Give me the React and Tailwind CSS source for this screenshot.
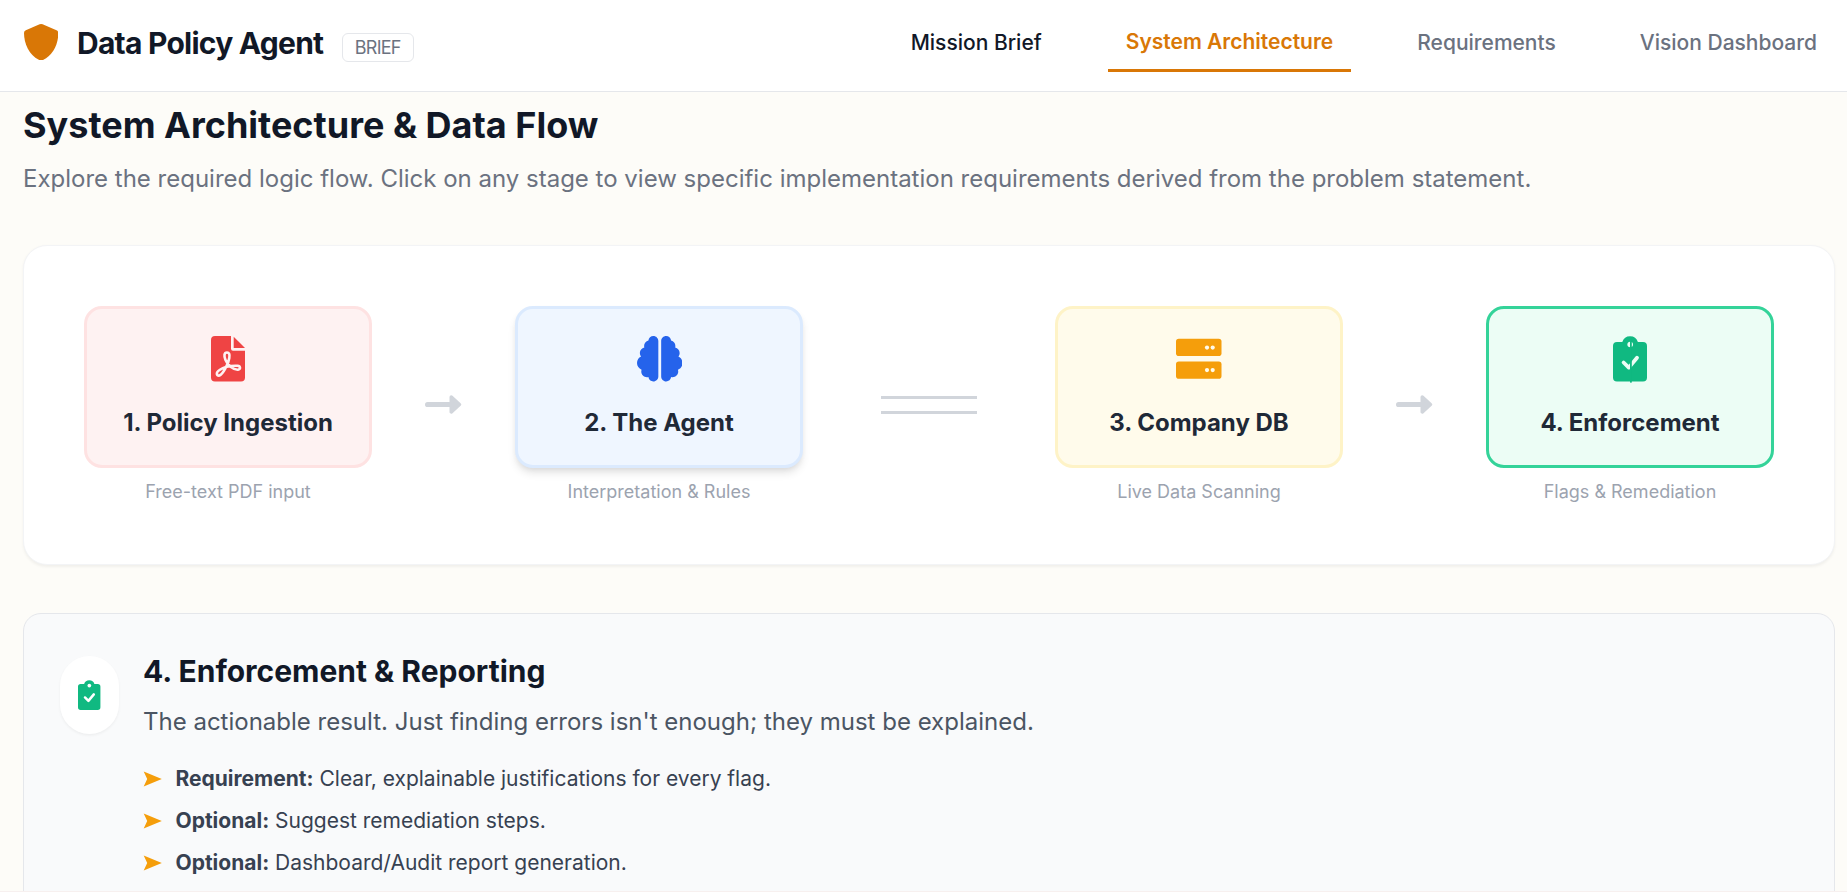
import React, { useState } from 'react';
import { FaBrain } from 'react-icons/fa6';

const NAV_ITEMS = ['Mission Brief', 'System Architecture', 'Requirements', 'Vision Dashboard'];

const ShieldIcon = ({ className }) => (
  <svg viewBox="0 0 34.3 36.6" className={className} fill="currentColor">
    <path d="M15.6 .3 Q17.1 -.3 18.6 .3 L32.5 6.2 Q34.3 7 34.3 9 C34.3 20 29 31.5 18.6 36.2 Q17.1 36.8 15.7 36.2 C5.3 31.5 0 20 0 9 Q0 7 1.8 6.2 Z" />
  </svg>
);

const PdfIcon = ({ className }) => (
  <svg viewBox="0 0 34 45.5" className={className} fill="currentColor">
    <path d="M4 0 H20 V12.7 A2 2 0 0 0 22 14.7 H34 V41.5 A4 4 0 0 1 30 45.5 H4 A4 4 0 0 1 0 41.5 V4 A4 4 0 0 1 4 0 Z" />
    <path d="M22.7 .7 L34 12 H22.7 Z" />
    <path
      d="M16 16.5 C13 16.5 12.8 20 14.5 24 C16.5 29 22 34 27 33.7 C30 33.4 29.5 30 26.5 29.8 C20 29.5 13 31 8.5 34 C4.5 36.5 5.5 40.3 8.5 39.5 C12 38 17.5 28 18.3 22 C19 18 18 16.5 16 16.5 Z"
      fill="none"
      stroke="#fef2f2"
      strokeWidth="2.6"
      strokeLinejoin="round"
    />
  </svg>
);

const ServerIcon = ({ className }) => (
  <svg viewBox="0 -2.75 45.5 45.5" className={className} fill="currentColor">
    <rect x="0" y="0" width="45.5" height="17.2" rx="2.8" />
    <rect x="0" y="22.8" width="45.5" height="17.2" rx="2.8" />
    <g fill="#fffbeb">
      <circle cx="31" cy="8.8" r="2.1" />
      <circle cx="36.7" cy="8.8" r="2.1" />
      <circle cx="31" cy="31.3" r="2.1" />
      <circle cx="36.7" cy="31.3" r="2.1" />
    </g>
  </svg>
);

const ClipboardShape = ({ hole }) => (
  <>
    <path d="M4 5.9 H9.3 A8.2 8.2 0 0 1 24.9 5.9 H30 A4 4 0 0 1 34 9.9 V41.5 A4 4 0 0 1 30 45.5 H4 A4 4 0 0 1 0 41.5 V9.9 A4 4 0 0 1 4 5.9 Z" />
    <circle cx="17.2" cy="8.5" r="2.8" fill={hole} />
    <path d="M10.6 26.5 L15.8 31.6 L24 21.8" fill="none" stroke={hole} strokeWidth="3.8" strokeLinecap="round" strokeLinejoin="round" />
  </>
);

const ClipboardIcon = ({ className }) => (
  <svg viewBox="0 0 34 45.5" className={className} fill="currentColor">
    <ClipboardShape hole="#ffffff" />
  </svg>
);

// Stage version has a thin seam down the middle
const ClipboardSeamIcon = ({ className }) => (
  <svg viewBox="0 0 34 45.5" className={`overflow-visible ${className}`} fill="currentColor">
    <ClipboardShape hole="#ecfdf5" />
    <rect x="17" y="1" width="1.8" height="45.6" />
  </svg>
);

const STAGES = [
  {
    title: '1. Policy Ingestion',
    caption: 'Free-text PDF input',
    icon: PdfIcon,
    iconColor: 'text-[#ef4444]',
    box: 'bg-[#fef2f2] border-[#fee2e2]',
  },
  {
    title: '2. The Agent',
    caption: 'Interpretation & Rules',
    icon: FaBrain,
    iconColor: 'text-[#2563eb] ml-px',
    box: 'bg-[#eff6ff] border-[#dbeafe] shadow-[0_6px_9px_-1.5px_rgba(0,0,0,0.1),0_3px_6px_-3px_rgba(0,0,0,0.1)]',
  },
  {
    title: '3. Company DB',
    caption: 'Live Data Scanning',
    icon: ServerIcon,
    iconColor: 'text-[#f59e0b]',
    box: 'bg-[#fffbeb] border-[#fef3c7]',
  },
  {
    title: '4. Enforcement',
    caption: 'Flags & Remediation',
    icon: ClipboardSeamIcon,
    iconColor: 'text-[#10b981]',
    box: 'bg-[#ecfdf5] border-[#34d399]',
  },
];

const DETAILS = [
  { label: 'Requirement:', text: 'Clear, explainable justifications for every flag.' },
  { label: 'Optional:', text: 'Suggest remediation steps.' },
  { label: 'Optional:', text: 'Dashboard/Audit report generation.' },
];

const Stage = ({ stage }) => {
  const Icon = stage.icon;
  return (
    <button className="w-[288px] flex flex-col items-center">
      <div className={`w-full h-[162px] rounded-[18px] border-[3px] pt-[27px] flex flex-col items-center ${stage.box}`}>
        <Icon className={`h-[45.5px] w-auto ${stage.iconColor}`} />
        <h3 className="mt-[23px] text-[24px] leading-[36px] font-bold text-[#1f2937]">{stage.title}</h3>
      </div>
      <p className="mt-3 text-[18px] leading-6 text-[#9ca3af]">{stage.caption}</p>
    </button>
  );
};

const Arrow = () => (
  <div className="w-[143px] h-[197px] flex items-center justify-center">
    <svg viewBox="0 0 36.3 19" className="w-[36.3px] h-[19px] text-[#d1d5db]" fill="currentColor">
      <rect x="0" y="6.9" width="27" height="5.2" rx="2.6" />
      <path d="M26.3 2.1 L34.4 9.5 L26.3 16.9 Z" stroke="currentColor" strokeWidth="3.6" strokeLinejoin="round" />
    </svg>
  </div>
);

const App = () => {
  const [activeTab, setActiveTab] = useState('System Architecture');

  const navColor = (item) => {
    if (item === activeTab) return 'font-semibold text-[#d97706] border-b-[3px] border-[#d97706]';
    if (item === 'Mission Brief') return 'font-medium text-[#111827]';
    return 'font-medium text-[#6b7280]';
  };

  return (
    <div className="h-[892px] overflow-hidden bg-[#fdfcf8] border-b border-[#f7f0ef] font-['Inter',sans-serif] text-[#111827]">
      {/* Header */}
      <header className="h-[92px] bg-white border-b border-[#e5e7eb] pl-6 pr-3 pb-[7px] flex items-center justify-between">
        <div className="flex items-center tracking-[-0.75px]">
          <ShieldIcon className="w-[34.3px] h-[36.6px] text-[#d97706]" />
          <span className="ml-[18.7px] mt-[2px] text-[30px] leading-[42px] font-bold">Data Policy Agent</span>
          <span className="ml-[19px] mt-[11px] h-[29px] pl-[11.5px] pr-3 rounded-[6px] border border-[#e5e7eb] text-[18px] leading-[27px] text-[#6b7280]">BRIEF</span>
        </div>
        <nav className="flex items-center gap-12">
          {NAV_ITEMS.map((item) => (
            <button
              key={item}
              onClick={() => setActiveTab(item)}
              className={`h-[60px] px-[18px] pt-[2px] text-[21px] leading-[30px] ${navColor(item)}`}
            >
              {item}
            </button>
          ))}
        </nav>
      </header>

      <main className="pl-[23px] pr-3">
        <h1 className="pt-[6px] text-[36px] leading-[54px] font-bold">System Architecture &amp; Data Flow</h1>
        <p className="mt-[8.5px] text-[24px] leading-[36px] text-[#6b7280]">
          Explore the required logic flow. Click on any stage to view specific implementation requirements derived from the problem statement.
        </p>

        {/* Flow diagram */}
        <section className="mt-[48.5px] h-[320px] rounded-3xl border border-[#f3f4f6] bg-white px-[60px] pt-[60px] shadow-[0_1.5px_3px_rgba(0,0,0,0.05)] flex items-start justify-between">
          <Stage stage={STAGES[0]} />
          <Arrow />
          <Stage stage={STAGES[1]} />
          <div className="w-[252px] h-[198px] flex items-center justify-center">
            <div className="w-24 h-[18px] border-y-[3px] border-[#d1d5db]"></div>
          </div>
          <Stage stage={STAGES[2]} />
          <Arrow />
          <Stage stage={STAGES[3]} />
        </section>

        {/* Selected stage details */}
        <section className="mt-12 h-[360px] rounded-[18px] border border-[#e5e7eb] bg-[#f9fafb] px-9 pt-[42px] flex items-start">
          <div className="w-[59px] h-[78px] shrink-0 rounded-full bg-white shadow-[0_1.5px_3px_rgba(0,0,0,0.05)] flex items-center justify-center">
            <ClipboardIcon className="h-[30px] w-auto text-[#10b981]" />
          </div>
          <div className="ml-6">
            <h2 className="-mt-[3px] text-[30px] leading-[36px] font-bold">4. Enforcement &amp; Reporting</h2>
            <p className="mt-[14.5px] text-[24px] leading-[36px] text-[#4b5563]">
              The actionable result. Just finding errors isn't enough; they must be explained.
            </p>
            <ul className="mt-6 space-y-3 text-[21px] leading-[30px] text-[#374151]">
              {DETAILS.map((detail, index) => (
                <li key={index} className="flex items-center">
                  <svg viewBox="0 0 19 16" className="w-[19px] h-4 mr-[13.5px] text-[#f59e0b]" fill="currentColor">
                    <path d="M.7 .5 L18.8 8 L.7 15.5 L4.2 8 Z" />
                  </svg>
                  <span>
                    <strong className="font-bold">{detail.label}</strong> {detail.text}
                  </span>
                </li>
              ))}
            </ul>
          </div>
        </section>
      </main>
    </div>
  );
};

export default App;
